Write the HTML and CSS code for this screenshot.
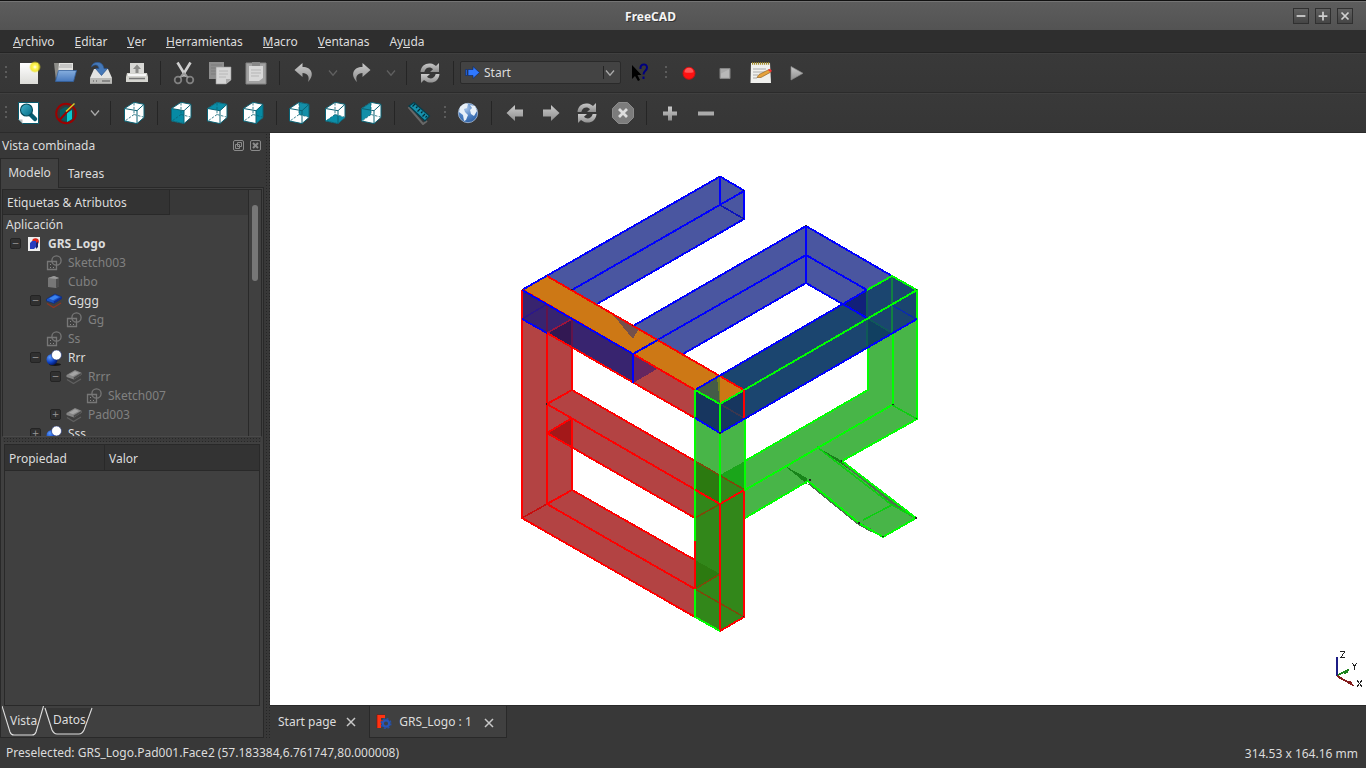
FILE: index.html
```html
<!DOCTYPE html>
<html lang="es">
<head>
<meta charset="utf-8">
<title>FreeCAD</title>
<link rel="stylesheet" href="styles.css">
</head>
<body>
<svg class="defs" aria-hidden="true">
  <defs>
    <linearGradient id="teal" x1="0" y1="0" x2="1" y2="1"><stop offset="0" stop-color="#45b5cd"/><stop offset="1" stop-color="#046a84"/></linearGradient>
    <linearGradient id="silver" x1="0" y1="0" x2="0" y2="1"><stop offset="0" stop-color="#cacaca"/><stop offset="1" stop-color="#8e8e8e"/></linearGradient>
    <linearGradient id="paper" x1="0" y1="0" x2="0" y2="1"><stop offset="0" stop-color="#fff"/><stop offset="1" stop-color="#dcdcd8"/></linearGradient>
    <linearGradient id="blueg" x1="0" y1="0" x2="0" y2="1"><stop offset="0" stop-color="#86aede"/><stop offset="1" stop-color="#4879bd"/></linearGradient>
    <radialGradient id="glow"><stop offset="0" stop-color="#fff"/><stop offset=".35" stop-color="#fff65a"/><stop offset=".7" stop-color="#f2e722" stop-opacity=".85"/><stop offset="1" stop-color="#eadf20" stop-opacity="0"/></radialGradient>
    <radialGradient id="ball" cx=".3" cy=".3" r=".8"><stop offset="0" stop-color="#5b9bff"/><stop offset=".6" stop-color="#0c3fc0"/><stop offset="1" stop-color="#04145c"/></radialGradient>
    <radialGradient id="world" cx=".4" cy=".25" r=".8"><stop offset="0" stop-color="#a8c4e8"/><stop offset=".55" stop-color="#4d80c2"/><stop offset="1" stop-color="#2c5d9f"/></radialGradient>
  </defs>
  <symbol id="cube" viewBox="0 0 24 24">
    <path d="M2.500 7.500 12 1.300 22 3.300V16.500L15 22.600 2.500 20Z" fill="#fff"/>
  </symbol>
  <symbol id="cube-lines" viewBox="0 0 24 24">
    <path d="M2.500 7.500 12 1.300 22 3.300V16.500L15 22.600 2.500 20ZM2.500 7.500 15 9.700 22 3.300M15 9.700V22.600" fill="none" stroke="#0b6274" stroke-width="1" stroke-linejoin="round"/>
    <path d="M12 2V13.500L21.500 16M12 13.500 3 20" fill="none" stroke="#0b6274" stroke-width=".8" stroke-dasharray="2.500 1.400"/>
  </symbol>
  <symbol id="refresh" viewBox="0 0 24 24">
    <path d="M2.500 11C3 4.500 8 1.800 12.500 2.500 15 2.800 16.600 3.800 18 5L21 2V11H12L15 8.200C12.500 5.500 7.500 6 6.300 11Z" fill="url(#silver)"/>
    <path d="M21.500 13C21 19.500 16 22.200 11.500 21.500 9 21.200 7.400 20.200 6 19L3 22V13H12L9 15.800C11.500 18.500 16.500 18 17.700 13Z" fill="url(#silver)"/>
  </symbol>
  <symbol id="undo" viewBox="0 0 24 24"><path d="M3.500 9 11.500 2V6C21 6 24 14 17 21 19 15.500 16.500 12 11.500 12V16Z" fill="url(#silver)"/></symbol>
  <symbol id="chev" viewBox="0 0 12 12"><path d="M2 3.500 6 8.200 10 3.500" fill="none" stroke="currentColor" stroke-width="1.300"/></symbol>
  <symbol id="left" viewBox="0 0 24 24"><path d="M3.500 12 12 4V8.500H20V15.500H12V20Z" fill="url(#silver)"/></symbol>
  <symbol id="sketch" viewBox="0 0 16 16">
    <path d="M1.500 6.500H10.500V14.500H1.500Z" fill="none" stroke="#777" stroke-width="1.300"/><circle cx="10.500" cy="5.500" r="4.600" fill="none" stroke="#777" stroke-width="1.300"/><path d="M4 9h1v1H4zM4 12h1v1H4zM7 12h1v1H7z" fill="#888"/>
  </symbol>
  <symbol id="pad-grey" viewBox="0 0 16 16"><path d="M1 10.500 7.500 14.500 15 10" fill="none" stroke="#606060" stroke-width="1.200"/><path d="M.5 6 9 1 15.500 3.800V5.800L8 10.500.5 8Z" fill="#858585"/><path d="M7.500 8.500 15.500 3.800V5.800L8 10.500Z" fill="#4d4d4d"/><path d="M3 5.800 9 2.200 13 4 7 7.200Z" fill="#a5a5a5"/></symbol>
  <symbol id="union" viewBox="0 0 16 16"><ellipse cx="9" cy="14.500" rx="6" ry="1.500" fill="#151515"/><circle cx="6" cy="9.500" r="5.500" fill="url(#ball)"/><circle cx="10.500" cy="5" r="5" fill="#fff" stroke="#172e75" stroke-width=".6"/></symbol>
  <symbol id="close" viewBox="0 0 12 12"><path d="M2 2 10 10M10 2 2 10" stroke="#c8c8c8" stroke-width="1.500"/></symbol>
</svg>

<div class="window">
  <header class="titlebar">
    <div class="caption">FreeCAD</div>
    <div class="winbtns">
      <button class="winbtn"><svg viewBox="0 0 16 16"><path d="M3 8H13" /></svg></button>
      <button class="winbtn"><svg viewBox="0 0 16 16"><path d="M3 8H13M8 3V13"/></svg></button>
      <button class="winbtn"><svg viewBox="0 0 16 16"><path d="M4 4 12 12M12 4 4 12"/></svg></button>
    </div>
  </header>

  <nav class="menubar">
    <span><u>A</u>rchivo</span><span><u>E</u>ditar</span><span><u>V</u>er</span><span><u>H</u>erramientas</span><span><u>M</u>acro</span><span><u>V</u>entanas</span><span>Ay<u>u</u>da</span>
  </nav>

  <div class="toolbar">
    <i class="grip first"></i>
    <b class="tool"><svg viewBox="0 0 24 24"><path d="M3 2H21V23H3Z" fill="url(#paper)"/><circle cx="18" cy="6" r="6" fill="url(#glow)"/></svg></b>
    <b class="tool"><svg viewBox="0 0 24 24"><path d="M1 2H8L9 4H11V20H3Z" fill="#8d8d89"/><path d="M6 2H20V13H5Z" fill="#e2e2df"/><path d="M7 4H19M6 6H19" stroke="#aaa"/><path d="M5.500 9.500H23.500L20.500 20.500H2.500Z" fill="url(#blueg)" stroke="#34629f" stroke-width=".8"/></svg></b>
    <b class="tool"><svg viewBox="0 0 24 24"><path d="M5 8H19L23 17V22.500H1V17Z" fill="#e4e4e2"/><path d="M1 17H23V22.500H1Z" fill="#b9b9b6"/><path d="M4 20h1M7 20h1M13 20h8" stroke="#777" stroke-width="1.500"/><path d="M2.500 6C3 0 14 -1 15 7.500H18.500L12.500 14.500 6.500 7.500H10C9 3.500 6 3 2.500 6Z" fill="#4578b8" stroke="#28518b" stroke-width=".7"/></svg></b>
    <b class="tool"><svg viewBox="0 0 24 24"><path d="M5 2H19V13H5Z" fill="#d8d8d5"/><path d="M12 3.500 16 8H13.500V12H10.500V8H8Z" fill="#8b8b89"/><path d="M2 12H22L23 16V21H1V16Z" fill="#d5d5d0"/><path d="M3 14H21" stroke="#f6f6f6" stroke-width="2"/><path d="M4 17.500H20" stroke="#777" stroke-width="1.500"/></svg></b>
    <i class="sep"></i>
    <b class="tool"><svg viewBox="0 0 24 24"><path d="M5.500 1.500 14 15.500M18.500 1.500 10 15.500" stroke="#cfcfcf" stroke-width="2.600"/><circle cx="6" cy="19" r="3.300" fill="none" stroke="#808080" stroke-width="1.800"/><circle cx="18" cy="19" r="3.300" fill="none" stroke="#808080" stroke-width="1.800"/><path d="M8 16.500 12 12.500 16 16.500" fill="none" stroke="#999" stroke-width="2"/></svg></b>
    <b class="tool"><svg viewBox="0 0 24 24"><path d="M1 1H16V18H1Z" fill="#8e8e8e"/><path d="M3 4H14M3 7H14M3 10H14M3 13H8" stroke="#7c7c7c"/><path d="M8 6H23V19L18 23H8Z" fill="#d5d5d5" stroke="#999" stroke-width=".6"/><path d="M11 10H20M11 13H20M11 16H18" stroke="#b8b8b8"/><path d="M23 18H18V23Z" fill="#aaa"/></svg></b>
    <b class="tool"><svg viewBox="0 0 24 24"><path d="M2 2H22V23H2Z" fill="#a2a2a2" stroke="#828282"/><path d="M5 5H19V17L15 20H5Z" fill="#d8d8d8"/><path d="M7 9H17M7 12H17M7 15H15" stroke="#b5b5b5"/><path d="M8 1H16V5H8Z" fill="#888"/></svg></b>
    <i class="sep"></i>
    <b class="tool"><svg viewBox="0 0 24 24"><use href="#undo"/></svg></b>
    <b class="chev dim c23"><svg><use href="#chev"/></svg></b>
    <b class="tool"><svg class="flip" viewBox="0 0 24 24"><use href="#undo"/></svg></b>
    <b class="chev dim"><svg><use href="#chev"/></svg></b>
    <i class="sep"></i>
    <b class="tool"><svg viewBox="0 0 24 24"><use href="#refresh"/></svg></b>
    <i class="sep"></i>
    <div class="combo">
      <svg class="arrow" viewBox="0 0 15 13"><path d="M.5 3.500H2V9.500H.5ZM3 3.500H8V.5L14.500 6.500 8 12.500V9.500H3Z" fill="#2f78ff" stroke="#102c69" stroke-width=".7"/></svg>
      <span>Start</span><i></i><svg class="drop" viewBox="0 0 12 12"><use href="#chev"/></svg>
    </div>
    <b class="tool"><svg viewBox="0 0 24 24"><path d="M4 4V18L7 15 10 20 12 19 9.500 14H13.500Z" fill="#000"/><path d="M12.500 8C12 2.500 19 2 19 6.500 19 10 15.500 9.500 15.500 13.500M15.500 15.500V18" fill="none" stroke="#00007e" stroke-width="2"/></svg></b>
    <i class="grip"></i>
    <b class="tool"><svg viewBox="0 0 24 24"><circle cx="12" cy="12.300" r="6" fill="#f11" stroke="#c11" /><path d="M7.500 11.300A4.500 4.500 0 0 1 16.500 11.300Q12 12.300 7.500 11.300Z" fill="#ff5555"/></svg></b>
    <b class="tool"><svg viewBox="0 0 24 24"><path d="M7 7.500H17V17.500H7Z" fill="#aaa" stroke="#858585"/><path d="M8 12.500 16 8.500V16.500H8Z" fill="#b8b8b8"/></svg></b>
    <b class="tool"><svg viewBox="0 0 24 24"><path d="M2 2H21L22 22H1.500Z" fill="#f0f0ed"/><path d="M3 2.500H21" stroke="#a58d2c" stroke-width="2.500" stroke-dasharray="1.200 .8"/><path d="M4 8H17M4 11H16M4 14H9M4 17H8" stroke="#aaa"/><path d="M8 16.500 10 13.500 20 8.500 22 11 12 16.500Z" fill="#e6a23c" stroke="#84571b" stroke-width=".6"/><path d="M19 9 21 7.800 23 10 21.500 11.200Z" fill="#e33"/></svg></b>
    <b class="tool"><svg viewBox="0 0 24 24"><path d="M6 5.500 18 12.300 6 19Z" fill="url(#silver)" stroke="#888" stroke-width=".7"/></svg></b>
  </div>

  <div class="toolbar second">
    <i class="grip first"></i>
    <b class="tool"><svg viewBox="0 0 24 24"><path d="M1.500 1.500H21.500V22.500H5.500L1.500 18.500Z" fill="#fff" stroke="#07596b" stroke-width="1"/><path d="M1.500 18.500H5.500V22.500Z" fill="#bbb"/><path d="M13.500 13.500 18 18" stroke="#075d70" stroke-width="4.500" stroke-linecap="round"/><circle cx="9.500" cy="9" r="6" fill="url(#teal)" stroke="#064b5b" stroke-width="1.100"/></svg></b>
    <b class="tool off1"><svg viewBox="0 0 24 24"><path d="M6 9 11 6 18 7V18L13 21 6 18Z" fill="#075c63"/><path d="M13 12 18 9V18L13 21Z" fill="#09c9cf"/><circle cx="12" cy="12.500" r="9.800" fill="none" stroke="#9c0000" stroke-width="1.900"/><path d="M5 19.500 18 5.500" stroke="#9c0000" stroke-width="2"/><path d="M12 10.500 20.500 2.500" stroke="#d9cf27" stroke-width="1.500"/></svg></b>
    <b class="chev"><svg><use href="#chev"/></svg></b>
    <i class="sep"></i>
    <b class="tool"><svg viewBox="0 0 24 24"><use href="#cube"/><use href="#cube-lines"/></svg></b>
    <i class="sep"></i>
    <b class="tool"><svg viewBox="0 0 24 24"><use href="#cube"/><path d="M2.500 7.500 15 9.700V22.600L2.500 20Z" fill="#078aa3"/><use href="#cube-lines"/></svg></b>
    <b class="tool"><svg viewBox="0 0 24 24"><use href="#cube"/><path d="M2.500 7.500 12 1.300 22 3.300 15 9.700Z" fill="#0b8ea8"/><use href="#cube-lines"/></svg></b>
    <b class="tool"><svg viewBox="0 0 24 24"><use href="#cube"/><path d="M15 9.700 22 3.300V16.500L15 22.600Z" fill="#078aa3"/><use href="#cube-lines"/></svg></b>
    <i class="sep s10"></i>
    <b class="tool"><svg viewBox="0 0 24 24"><use href="#cube"/><path d="M12 1.300 22 3.300V16L12 13.500Z" fill="#148fa8"/><use href="#cube-lines"/></svg></b>
    <b class="tool"><svg viewBox="0 0 24 24"><use href="#cube"/><path d="M2.500 20 12 13.500 22 16.500 15 22.600Z" fill="#0b8ea8"/><use href="#cube-lines"/></svg></b>
    <b class="tool"><svg viewBox="0 0 24 24"><use href="#cube"/><path d="M2.500 7.500 12 1.300V13.500L2.500 20Z" fill="#148fa8"/><use href="#cube-lines"/></svg></b>
    <i class="sep s12"></i>
    <b class="tool"><svg viewBox="0 0 24 24"><path d="M1.500 6 16 23 20 20" fill="none" stroke="#686868" stroke-width="2"/><path d="M2 5 7 1.500 22.500 15 18 20Z" fill="#1791ac" stroke="#053e4c" stroke-width="1.200"/><path d="M8 3 5.500 5.500M10.500 5.500 9 7M13 8 10.500 10.500M15.500 10.500 14 12M18 13 15.500 15.500M20 15 18.500 16.500" stroke="#052b35" stroke-width="1.200"/></svg></b>
    <i class="grip g13"></i>
    <b class="tool"><svg viewBox="0 0 24 24"><circle cx="12" cy="12" r="9.700" fill="url(#world)" stroke="#b8cce5" stroke-width=".7"/><path d="M4 6Q8 1 12 3L11 7 8 8 9 11 12 14 10 19 8 20 7 14 3 11ZM14 4 19 5 21 10 18 15 15 13 14 9 16 7Z" fill="#e8f0f8"/></svg></b>
    <i class="sep"></i>
    <b class="tool"><svg viewBox="0 0 24 24"><use href="#left"/></svg></b>
    <b class="tool"><svg class="flip" viewBox="0 0 24 24"><use href="#left"/></svg></b>
    <b class="tool"><svg viewBox="0 0 24 24"><use href="#refresh"/></svg></b>
    <b class="tool"><svg viewBox="0 0 24 24"><path d="M7.500 1.500H16.500L22.500 7.500V16.500L16.500 22.500H7.500L1.500 16.500V7.500Z" fill="#7c7c7c" stroke="#8b8b8b"/><path d="M8 8 16 16M16 8 8 16" stroke="#dedede" stroke-width="2.800"/></svg></b>
    <i class="sep"></i>
    <b class="tool"><svg viewBox="0 0 24 24"><path d="M10 5.500H14V10.500H19V14.500H14V19.500H10V14.500H5V10.500H10Z" fill="url(#silver)"/></svg></b>
    <b class="tool"><svg viewBox="0 0 24 24"><path d="M4 10.500H20V14.500H4Z" fill="#aaa"/></svg></b>
  </div>

  <main class="workspace">
    <aside class="dock">
      <div class="dock-title"><span>Vista combinada</span>
        <svg viewBox="0 0 12 12"><rect x=".5" y=".5" width="10" height="10" rx="1.500"/><path d="M4.500 2.500H8.500V6.500H4.500ZM2.500 4.500H6.500V8.500H2.500Z"/></svg>
        <svg viewBox="0 0 12 12"><rect x=".5" y=".5" width="10" height="10" rx="1.500"/><path d="M3 3 8 8M8 3 3 8" stroke-width="2"/></svg>
      </div>
      <div class="tabs"><div class="tab active">Modelo</div><div class="tab">Tareas</div></div>
      <div class="pane">
        <div class="tree">
          <div class="tree-main">
            <div class="tree-head"><span>Etiquetas &amp; Atributos</span></div>
            <div class="row root">Aplicación</div>
            <div class="row l1"><i class="ex">−</i><svg class="ic" viewBox="0 0 16 16"><path d="M2 1H14V15H2Z" fill="#eee"/><circle cx="9.500" cy="5.500" r="3.300" fill="#db2418"/><path d="M4 7 6 5H10V11L8 13H4Z" fill="#263cbe"/><path d="M10 7 12 5.500V11L10 13Z" fill="#16226d"/></svg><strong>GRS_Logo</strong></div>
            <div class="row l2 off"><i class="ex none"></i><svg class="ic"><use href="#sketch"/></svg>Sketch003</div>
            <div class="row l2 off"><i class="ex none"></i><svg class="ic" viewBox="0 0 16 16"><path d="M2 4 8 2 13 4V12L10 14 2 13Z" fill="#777"/><path d="M10 5 13 4V12L10 14Z" fill="#4d4d4d"/><path d="M2 4 8 2 13 4 10 5Z" fill="#999"/></svg>Cubo</div>
            <div class="row l2"><i class="ex">−</i><svg class="ic" viewBox="0 0 16 16"><path d="M1 10.500 7.500 14.500 15 10" fill="none" stroke="#8c3522" stroke-width="1.300"/><path d="M.5 6 9 1 15.500 3.800V5.800L8 10.500.5 8Z" fill="#1c55c4" stroke="#0a256f" stroke-width=".6"/><path d="M7.500 8.500 15.500 3.800V5.800L8 10.500Z" fill="#102e91"/><path d="M3 5.500 9 2.200 13 4 7 7.200Z" fill="#3b82ee"/></svg>Gggg</div>
            <div class="row l3 off"><i class="ex none"></i><svg class="ic"><use href="#sketch"/></svg>Gg</div>
            <div class="row l2 off"><i class="ex none"></i><svg class="ic"><use href="#sketch"/></svg>Ss</div>
            <div class="row l2"><i class="ex">−</i><svg class="ic"><use href="#union"/></svg>Rrr</div>
            <div class="row l3 off"><i class="ex">−</i><svg class="ic"><use href="#pad-grey"/></svg>Rrrr</div>
            <div class="row l4 off"><i class="ex none"></i><svg class="ic"><use href="#sketch"/></svg>Sketch007</div>
            <div class="row l3 off"><i class="ex">+</i><svg class="ic"><use href="#pad-grey"/></svg>Pad003</div>
            <div class="row l2"><i class="ex">+</i><svg class="ic"><use href="#union"/></svg>Sss</div>
          </div>
          <div class="scroll"><i></i></div>
        </div>
        <div class="hsplit"></div>
        <div class="props"><div class="props-head"><span>Propiedad</span><span>Valor</span></div></div>
        <div class="btabs">
          <svg viewBox="0 0 100 32"><path d="M44 2H90L82 24Q80 28 77 28H56Q53 28 52 24Z" fill="#353535"/><path d="M0 0 8 26Q9 29 12 29H30Q33 29 34 26L41.500 0M43 2 50 24Q52 28 55 28H77Q80 28 82 24L90 2" fill="none" stroke="#ddd" stroke-width="1.100"/></svg>
          <span>Vista</span><span>Datos</span>
        </div>
      </div>
    </aside>
    <div class="vsplit"></div>
    <section class="docs">
      <div class="view">
        <svg class="model" viewBox="270 133 1096 572" shape-rendering="crispEdges">
          <!-- translucent faces -->
          <g fill="#4a56a0">
            <path d="M522 290 720 177 744 191V219L597 304 547 276Z"/>
            <path d="M633 326 806 226 892 276 867 318 806 283 683 355Z"/>
          </g>
          <path fill="#b34343" fill-rule="evenodd" d="M522 290 695 390V617L522 518ZM572 347V390L695 461V418ZM572 447V490L695 560V518Z"/>
          <path fill="#a31819" d="M547 433 572 418V447Z"/>
          <path fill="#48b548" d="M695 418H745V461L868 390V347L917 319V419L842 461 916 518 883 537 859 523 808 481 745 518 720 631 695 617Z"/>
          <path fill="#32871a" d="M695 461 745 490V617L720 631 695 617Z"/>
          <path fill="#2c7a10" d="M695 560 720 574 695 589ZM695 461 720 475V504L695 490Z"/>
          <path fill="#1aa51a" d="M720 475 745 461V490Z"/>
          <path fill="#38246f" d="M522 290 633 354V383L522 319Z"/>
          <path fill="#321853" d="M547 333 572 319V347Z"/>
          <path fill="#1b456f" d="M695 390 892 276 917 290V319L720 433 695 418Z"/>
          <path fill="#17365f" d="M695 390 720 404 744 390V418L720 433 695 418Z"/>
          <path fill="#12207a" d="M843 304 867 290V318Z"/>
          <path fill="#114061" d="M867 318 892 333 867 347Z"/>
          <path fill="#cd7815" d="M523 290 547 276 744 390 720 404Z"/>
          <path fill="#b34343" d="M633 354 695 390V418L633 383Z"/>
          <path fill="#65265f" d="M633 354 657 369 633 383Z"/>
          <path fill="#445c48" d="M695 390 719 376 720 404Z"/>
          <path fill="#77801a" d="M717 377H720V404Z"/>
          <path fill="#74504b" d="M614 316 639 328 633 339Z"/>
          <path fill="#18841a" d="M785 466 807 478V484ZM817 447 842 461 850 470Z"/>
          <path d="M844 463 893 503 913 516M809 483 858 523 872 531" fill="none" stroke="#4b7549" stroke-width="3"/>
          <!-- occluded edges -->
          <g fill="none" stroke-width="1.600">
            <path stroke="#7b4a0a" d="M695 461 745 490M695 518 720 504M695 589 744 617M695 589 720 574"/>
            <path stroke="#3b374f" d="M720 404 744 418"/>
            <path stroke="#0f5a58" d="M867 290V347M867 318 892 333"/>
            <path stroke="#118043" d="M892 276V333"/>
            <path stroke="#0d2da8" d="M892 305 916 319"/>
            <path stroke="#2c1888" d="M522 319 547 304"/>
            <path stroke="#62144b" d="M547 304V333M572 319V347"/>
            <path stroke="#9c153d" d="M547 333 572 319"/>
            <path stroke="#0bcf0f" d="M817 447 892 505 863 520M892 405 917 419M892 505 916 518"/>
            <path stroke="#0b12bc" d="M720 205 744 219"/>
            <path stroke="#c80c0c" d="M522 518 547 504"/>
          </g>
          <!-- visible edges -->
          <g fill="none" stroke-width="1.900">
            <path stroke="#00f" d="M522 290 720 176.500 744 190.500V219L597 304M744 191 572 290M720 177V205M633 326 806 226 892 276M633 354 806 255 867 290M683 354 806 283 867 318M806 226V283"/>
            <path stroke="#f00" d="M522 290V518L695 617M547 333V504L695 589M572 347V390L695 461M547 404 572 390M547 404 720 504 744 490V617L720 631V504M547 433 695 518M572 418V490L695 560M547 504 572 490M547 333 695 418M547 276 744 390V418M523 290 695 390M572 418 547 433"/>
            <path stroke="#00f" d="M522 290 633 354V383M633 354 658 340M522 319 547 333M695 390 867 290"/>
            <path stroke="#0f0" d="M695 390 720 404 917 290M867 290 892 276 917 290V419L842 461 916 518 883 537 859 523 808 481 745 518M868 348V390L745 461M892 405 745 490V418M720 404V504M695 390V541M695 589V617L720 631"/>
            <path stroke="#0f0" d="M893 334V405"/>
            <path stroke="#00f" d="M695 418 720 433 917 319"/>
            <path stroke="#0f0" d="M720 404V430"/>
            <path stroke="#f00" d="M695 541V589M695 490 720 504 744 490M744 390V418"/>
          </g>
          <g fill="#222"><path d="M719 176h1v1h-1zM743 190h1v1h-1zM743 218h1v1h-1zM522 289h1v1h-1zM805 225h2v1h-2zM571 289h2v1h-2zM632 325h1v1h-1zM916 289h1v1h-1zM916 418h1v1h-1zM892 404h2v1h-2zM809 479h2v2h-2zM841 460h1v2h-1zM915 517h2v2h-2zM882 536h2v1h-2zM858 522h2v2h-2zM719 432h2v2h-2zM743 616h1v1h-1zM546 403h1v2h-1z"/></g>
          <!-- axis cross -->
          <g fill="none" stroke-width="2"><path stroke="#1c1c84" d="M1337 657V676"/><path stroke="#841c1c" d="M1337 676 1353 685"/><path stroke="#1c841c" stroke-width="1.500" d="M1338 675 1348 670"/></g>
          <path fill="#841c1c" d="M1345 681 1351 681 1354 686 1348 684Z"/><path fill="#1c841c" d="M1343 671 1349 669 1348 673 1344 674Z"/>
          <g fill="none" stroke="#222" stroke-width="1"><path d="M1340 651.500H1345M1344.500 652 1340.500 658M1340 657.500H1345M1352 663 1354.500 666 1357 663M1354.500 666V670M1357 680 1362 687M1362 680 1357 687"/></g>
        </svg>
      </div>
      <div class="doctabs">
        <div class="doctab">Start page<svg class="x"><use href="#close"/></svg></div>
        <div class="doctab active"><svg class="logo" viewBox="0 0 16 16"><path d="M1 1H9V4H5V6.500H8V9.500H5V14H1Z" fill="#ff3311"/><path d="M1 14V1L2 0H9" fill="none" stroke="#8b1308" stroke-width=".7"/><circle cx="10" cy="9.500" r="3.200" fill="none" stroke="#2755bb" stroke-width="2.300"/><circle cx="10" cy="9.500" r="4.800" fill="none" stroke="#2450a8" stroke-width="1.500" stroke-dasharray="2 1.770"/></svg><span>GRS_Logo : 1</span><svg class="x"><use href="#close"/></svg></div>
      </div>
    </section>
  </main>

  <footer class="status"><span>Preselected: GRS_Logo.Pad001.Face2 (57.183384,6.761747,80.000008)</span><span>314.53 x 164.16 mm</span></footer>
</div>
</body>
</html>
```
FILE: styles.css
```css
* { box-sizing: border-box; }
body { margin: 0; background: #383838; color: #dcdcdc; font: 12px/19px "Noto Sans", sans-serif; overflow: hidden; }
.defs { position: absolute; width: 0; height: 0; }
svg { display: block; flex: none; }
.window { width: 1366px; height: 768px; display: flex; flex-direction: column; }

.titlebar { height: 30px; flex: none; display: flex; align-items: center; padding-right: 13px; background: linear-gradient(#5d5d5d, #535353); border-top: 1px solid #111; box-shadow: inset 0 1px #747474; }
.caption { flex: 1; padding: 1px 0 0 8px; text-align: center; font-weight: 700; color: #f4f4f4; text-shadow: 1px 1px #333; }
.winbtns { display: flex; gap: 6px; }
.winbtn { width: 16px; height: 16px; padding: 0; border: 1px solid #303030; background: linear-gradient(#606060, #454545); }
.winbtn svg { width: 14px; height: 14px; stroke: #d0d0d0; stroke-width: 2; fill: none; }

.menubar { height: 23px; flex: none; display: flex; gap: 20px; padding: 2px 0 0 13px; background: #2e2e2e; border-bottom: 1px solid #242424; letter-spacing: -.07px; }
.menubar u { text-decoration: none; display: inline-block; height: 16px; line-height: 19px; border-bottom: 1px solid #dcdcdc; vertical-align: top; }

.toolbar { height: 40px; flex: none; display: flex; align-items: center; background: linear-gradient(#393939, #363636); border-bottom: 1px solid #2b2b2b; box-shadow: inset 0 1px #404040; }
.tool { width: 36px; flex: none; display: flex; justify-content: center; }
.tool svg { width: 24px; height: 24px; }
.tool svg.flip { transform: scaleX(-1); }
.off1 { margin-left: 1px; }
.chev { width: 21px; display: flex; justify-content: center; color: #aaa; }
.chev svg { width: 12px; height: 12px; }
.c23 { width: 23px; }
.dim { color: #606060; }
.sep { width: 11px; height: 24px; flex: none; background: linear-gradient(#252525, #252525) 5px 0 / 1px 100% no-repeat; }
.s10 { width: 10px; }
.s12 { width: 12px; }
.grip { width: 13px; height: 13px; flex: none; background: repeating-linear-gradient(#5c5c5c 0 2px, transparent 2px 5px) 7px 0 / 2px 12px no-repeat; }
.grip.first { width: 11px; background-position: 5px 0; }
.combo { width: 161px; height: 23px; margin: 0 1px; flex: none; display: flex; align-items: center; padding: 0 4px; background: #434343; border: 1px solid #2a2a2a; border-radius: 2px; }
.combo span { flex: 1; padding-left: 4px; }
.combo i { width: 1px; height: 13px; background: #242424; }
.arrow { width: 15px; height: 13px; margin-top: -1px; }
.drop { width: 12px; height: 12px; color: #aaa; }

.workspace { height: 605px; flex: none; display: flex; }
.dock { width: 264px; display: flex; flex-direction: column; }
.dock-title { height: 25px; display: flex; align-items: center; padding: 0 2px; gap: 5px; }
.dock-title span { flex: 1; }
.dock-title svg { width: 12px; height: 12px; fill: none; stroke: #8b8b8b; }
.tabs { height: 29px; display: flex; }
.tab { width: 54px; text-align: center; padding-top: 6px; }
.tab.active { width: 59px; padding-top: 4px; background: #404040; border: 1px solid #292929; border-bottom: 0; margin-bottom: -1px; z-index: 1; }
.pane { height: 551px; background: #404040; border: 1px solid #292929; padding: 1px 1px 0; display: flex; flex-direction: column; }
.tree { height: 248px; display: flex; border: 1px solid #292929; border-bottom-color: #4a4a4a; }
.tree-main { width: 246px; height: 246px; overflow: hidden; border-right: 1px solid #292929; }
.tree-head { height: 25px; background: #383838; }
.tree-head span { display: block; width: 167px; height: 25px; padding: 3px 0 0 4px; background: #333; border: solid #292929; border-width: 0 1px 1px 0; }
.row { height: 19px; display: flex; align-items: center; }
.root { padding-left: 3px; }
.l1 { padding-left: 7px; }
.l2 { padding-left: 27px; }
.l3 { padding-left: 47px; }
.l4 { padding-left: 67px; }
.off { color: #818181; }
.ex { width: 11px; height: 11px; flex: none; margin-right: 5px; border: 1px solid #242424; border-radius: 2px; background: #303030; color: #999; font: 9px/8px "DejaVu Sans", sans-serif; text-align: center; }
.ex.none { visibility: hidden; }
.ic { width: 16px; height: 16px; margin-right: 6px; }
.scroll { padding: 15px 0 0 3px; }
.scroll i { display: block; width: 6px; height: 76px; border-radius: 3px; background: #777; }
.hsplit { height: 5px; margin: 0 1px; background: #3b3b3b radial-gradient(#272727 40%, transparent 45%) 0 0 / 3px 3px; }
.props { height: 262px; margin: 2px 2px 0; border: 1px solid #292929; }
.props-head { height: 26px; display: flex; background: #333; border-bottom: 1px solid #292929; }
.props-head span { padding: 4px 4px 0; width: 99px; }
.props-head span + span { border-left: 1px solid #292929; width: 155px; }
.btabs { height: 31px; display: grid; grid-template-columns: 42px 58px; }
.btabs svg { grid-area: 1 / 1 / 2 / 3; width: 100px; height: 32px; }
.btabs span { grid-row: 1; padding: 5px 0 0 8px; }
.btabs span:nth-of-type(1) { grid-column: 1; }
.btabs span:nth-of-type(2) { grid-column: 2; padding: 4px 0 0 9px; }
.vsplit { width: 6px; background: #383838 radial-gradient(#252525 40%, transparent 45%) 1px 0 / 3px 3px; }
.docs { flex: 1; }
.view { height: 572px; background: #fff; }
.model { width: 1096px; height: 572px; }
.doctabs { height: 33px; display: flex; border-top: 1px solid #292929; }
.doctab { width: 99px; height: 32px; display: flex; align-items: center; justify-content: space-between; padding: 0 12px 2px 8px; }
.doctab .x { margin-top: 2px; }
.doctab.active { width: 138px; background: #404040; border: 1px solid #292929; border-top: 0; padding: 0 11px 0 6px; }
.doctab.active span { margin-left: -4px; }
.x { width: 12px; height: 12px; }
.logo { width: 16px; height: 16px; }
.status { height: 30px; flex: none; display: flex; justify-content: space-between; padding: 5px 8px 0 6px; }
.status span + span { padding-top: 1px; }
```
